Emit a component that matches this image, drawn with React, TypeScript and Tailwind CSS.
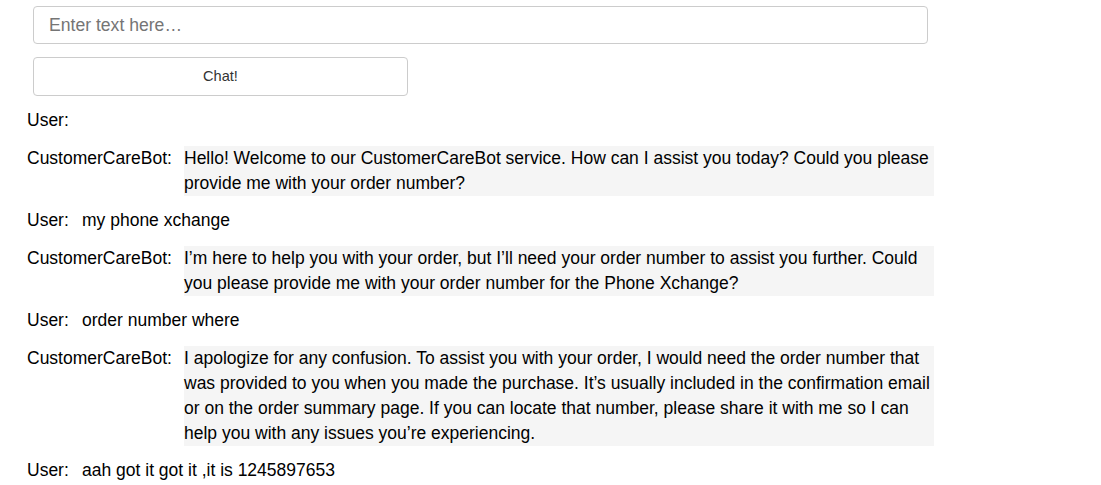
const messages: { who: "User" | "CustomerCareBot"; text: string }[] = [
  { who: "User", text: "" },
  {
    who: "CustomerCareBot",
    text: "Hello! Welcome to our CustomerCareBot service. How can I assist you today? Could you please provide me with your order number?",
  },
  { who: "User", text: "my phone xchange" },
  {
    who: "CustomerCareBot",
    text: "I’m here to help you with your order, but I’ll need your order number to assist you further. Could you please provide me with your order number for the Phone Xchange?",
  },
  { who: "User", text: "order number where" },
  {
    who: "CustomerCareBot",
    text: "I apologize for any confusion. To assist you with your order, I would need the order number that was provided to you when you made the purchase. It’s usually included in the confirmation email or on the order summary page. If you can locate that number, please share it with me so I can help you with any issues you’re experiencing.",
  },
  { who: "User", text: "aah got it got it ,it is 1245897653" },
];

export default function App() {
  return (
    <div className="min-h-screen bg-white font-['Liberation_Sans',Arial,sans-serif] text-black">
      <div className="pl-[33px] pt-[6px]">
        <input
          type="text"
          placeholder="Enter text here…"
          className="block h-[38px] w-[895px] rounded-[4px] border border-[#cccccc] px-[15px] text-[17.6px] text-[#333] placeholder:text-[#757575] outline-none"
        />
        <button className="mt-[13px] block h-[39px] w-[375px] rounded-[4px] border border-[#cccccc] bg-white text-[14.6px] text-[#333]">
          Chat!
        </button>
      </div>
      <div className="mt-[12px] flex flex-col gap-[12.5px] pl-[27px] text-[17.5px] leading-[25px]">
        {messages.map((m, i) =>
          m.who === "User" ? (
            <div key={i} className="flex">
              <span className="w-[55px] shrink-0">User:</span>
              <span>{m.text}</span>
            </div>
          ) : (
            <div key={i} className="flex">
              <span className="w-[157px] shrink-0">CustomerCareBot:</span>
              <p className="w-[750px] bg-[#f5f5f5]">{m.text}</p>
            </div>
          )
        )}
      </div>
    </div>
  );
}
